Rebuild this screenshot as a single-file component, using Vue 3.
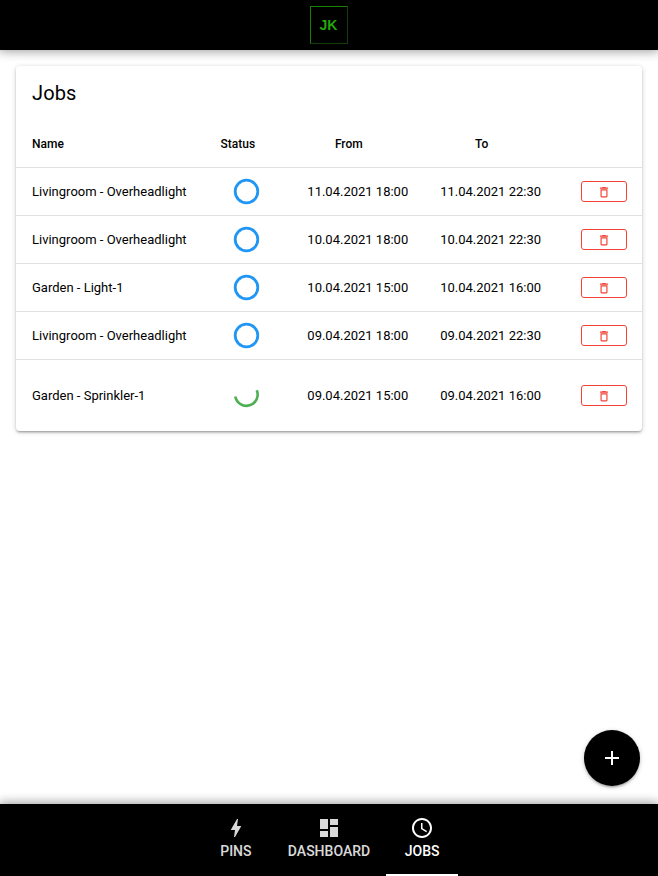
<script setup>
const jobs = [
  { name: 'Livingroom - Overheadlight', from: '11.04.2021 18:00', to: '11.04.2021 22:30' },
  { name: 'Livingroom - Overheadlight', from: '10.04.2021 18:00', to: '10.04.2021 22:30' },
  { name: 'Garden - Light-1', from: '10.04.2021 15:00', to: '10.04.2021 16:00' },
  { name: 'Livingroom - Overheadlight', from: '09.04.2021 18:00', to: '09.04.2021 22:30' },
  { name: 'Garden - Sprinkler-1', from: '09.04.2021 15:00', to: '09.04.2021 16:00', running: true },
]

const tabs = [
  {
    label: 'PINS',
    icon: 'M11 21h-1l1-7H7.5c-.58 0-.57-.32-.38-.66.19-.34.05-.08.07-.12C8.48 10.94 10.42 7.54 13 3h1l-1 7h3.5c.49 0 .56.33.47.51l-.07.15C12.96 17.55 11 21 11 21z',
  },
  { label: 'DASHBOARD', icon: 'M3 13h8V3H3v10zm0 8h8v-6H3v6zm10 0h8V11h-8v10zm0-18v6h8V3h-8z' },
  {
    label: 'JOBS',
    active: true,
    icon: 'M11.99 2C6.47 2 2 6.48 2 12s4.47 10 9.99 10C17.52 22 22 17.52 22 12S17.52 2 11.99 2zM12 20c-4.42 0-8-3.58-8-8s3.58-8 8-8 8 3.58 8 8-3.58 8-8 8zm.5-13H11v6l5.25 3.15.75-1.23-4.5-2.67z',
  },
]
</script>

<template>
  <div class="layout">
    <header class="header">
      <div class="logo">JK</div>
    </header>

    <main class="page">
      <section class="card">
        <h1 class="title">Jobs</h1>
        <div class="row head">
          <div class="name">Name</div>
          <div class="label">Status</div>
          <div class="label">From</div>
          <div class="label">To</div>
        </div>
        <div v-for="(job, i) in jobs" :key="i" class="row" :class="{ tall: job.running }">
          <div class="name">{{ job.name }}</div>
          <div class="status">
            <svg v-if="job.running" class="ring running" viewBox="0 0 25 25">
              <path d="M22.8 7.2A11.3 11.3 0 1 1 1.25 13.6" />
            </svg>
            <svg v-else class="ring" viewBox="0 0 25 25">
              <circle cx="12.5" cy="12.5" r="11.3" />
            </svg>
          </div>
          <div class="date">{{ job.from }}</div>
          <div class="date">{{ job.to }}</div>
          <div class="action">
            <button class="delete" aria-label="Delete">
              <svg viewBox="0 -0.4 24 24">
                <path d="M6 19c0 1.1.9 2 2 2h8c1.1 0 2-.9 2-2V7H6v12zM8 9h8v10H8V9zm7.5-5l-1-1h-5l-1 1H5v2h14V4h-3.5z" />
              </svg>
            </button>
          </div>
        </div>
      </section>
    </main>

    <button class="fab" aria-label="Add">
      <svg viewBox="0 0 24 24"><path d="M19 13h-6v6h-2v-6H5v-2h6V5h2v6h6v2z" /></svg>
    </button>

    <footer class="footer">
      <div v-for="tab in tabs" :key="tab.label" class="tab" :class="{ active: tab.active }">
        <svg viewBox="0 0 24 24"><path :d="tab.icon" /></svg>
        <span>{{ tab.label }}</span>
      </div>
    </footer>
  </div>
</template>

<style>
body {
  background: #fff;
}
</style>

<style scoped>
.layout {
  position: relative;
  display: flex;
  flex-direction: column;
  height: 100vh;
  overflow: hidden;
  box-sizing: border-box;
  font-family: Roboto, sans-serif;
  color: #000;
}
.header {
  display: flex;
  align-items: center;
  justify-content: center;
  flex: none;
  height: 50px;
  background: #000;
  box-shadow: 0 0 10px 2px rgba(0, 0, 0, 0.2), 0 0 10px rgba(0, 0, 0, 0.24);
}
.logo {
  box-sizing: border-box;
  width: 38px;
  height: 38px;
  padding-right: 1px;
  border: 1px solid #1b8006;
  border-right-color: #123d09;
  border-bottom-color: #123d09;
  color: #27a40b;
  font: bold 14px/36px 'Liberation Sans', sans-serif;
  text-align: center;
}
.page {
  flex: 1;
  padding: 16px;
}
.card {
  height: 365px;
  border-radius: 4px;
  background: #fff;
  box-shadow: 0 1px 5px rgba(0, 0, 0, 0.2), 0 2px 2px rgba(0, 0, 0, 0.14), 0 3px 1px -2px rgba(0, 0, 0, 0.12);
}
.title {
  margin: 0;
  padding: 11px 16px;
  font-size: 20px;
  font-weight: 400;
  line-height: 32px;
  letter-spacing: 0.1px;
}
.row {
  display: grid;
  grid-template-columns: 186.4px 89px 132.8px 132.8px 85px;
  align-items: center;
  box-sizing: border-box;
  height: 48px;
  border-bottom: 1px solid #e0e0e0;
  font-size: 13px;
  white-space: nowrap;
}
.tall {
  height: 71px;
  border-bottom: 0;
}
.head {
  font-size: 12px;
  font-weight: 500;
}
.name {
  padding-left: 16px;
}
.label {
  padding-right: 18px;
  text-align: center;
}
.date {
  text-align: center;
}
.status {
  display: flex;
  justify-content: center;
}
.ring {
  width: 25px;
  height: 25px;
  overflow: visible;
  fill: none;
  stroke: #2196f3;
  stroke-width: 2.8;
}
.running {
  stroke: #4caf50;
  stroke-width: 2.6;
}
.action {
  padding-left: 24px;
}
.delete {
  display: flex;
  align-items: center;
  justify-content: center;
  box-sizing: border-box;
  width: 46px;
  height: 21px;
  padding: 0;
  border: 1px solid #f44336;
  border-radius: 3px;
  background: transparent;
}
.delete svg {
  width: 14px;
  height: 14px;
  fill: #f44336;
}
.fab {
  position: absolute;
  right: 18px;
  bottom: 90px;
  display: flex;
  align-items: center;
  justify-content: center;
  width: 56px;
  height: 56px;
  padding: 0;
  border: 0;
  border-radius: 50%;
  background: #000;
  box-shadow: 0 1px 5px rgba(0, 0, 0, 0.2), 0 2px 2px rgba(0, 0, 0, 0.14), 0 3px 1px -2px rgba(0, 0, 0, 0.12);
}
.fab svg {
  width: 24px;
  height: 24px;
  fill: #fff;
}
.footer {
  display: flex;
  justify-content: center;
  flex: none;
  height: 72px;
  background: #000;
  box-shadow: 0 0 10px 2px rgba(0, 0, 0, 0.2), 0 0 10px rgba(0, 0, 0, 0.24);
}
.tab {
  display: flex;
  flex-direction: column;
  align-items: center;
  box-sizing: border-box;
  min-width: 72px;
  padding: 12px 16px 0;
  border-bottom: 2px solid transparent;
  color: #fff;
  font-size: 14px;
  font-weight: 500;
  line-height: 22px;
}
.tab svg {
  width: 24px;
  height: 24px;
  fill: currentColor;
}
.tab svg,
.tab span {
  opacity: 0.85;
}
.active {
  border-bottom-color: #fff;
}
.active svg,
.active span {
  opacity: 1;
}
</style>
